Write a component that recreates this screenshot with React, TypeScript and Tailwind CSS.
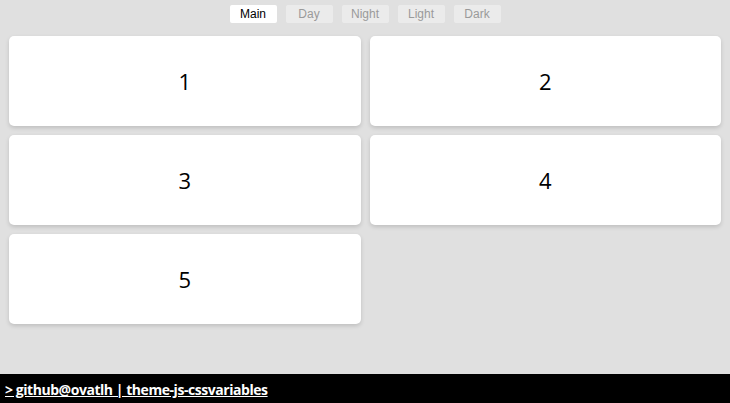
const themes = ["Main", "Day", "Night", "Light", "Dark"];
const cards = [1, 2, 3, 4, 5];

export default function App() {
  return (
    <div className="flex min-h-screen flex-col bg-[#e0e0e0] font-['Liberation_Sans',Arial,sans-serif]">
      <div className="flex h-[27px] justify-center gap-[9px] pt-[5px]">
        {themes.map((t, i) => (
          <button
            key={t}
            className={
              i === 0
                ? "h-[18px] w-[47px] rounded-[2px] bg-white text-[12px] leading-[18px] text-black"
                : "h-[18px] w-[47px] rounded-[2px] bg-[#ebebeb] text-[12px] leading-[18px] text-[#9a9a9a]"
            }
          >
            {t}
          </button>
        ))}
      </div>

      <div className="grid grid-cols-2 gap-[9px] p-[9px]">
        {cards.map((n) => (
          <div
            key={n}
            className="flex h-[90px] items-center justify-center rounded-[5px] bg-white font-['Open_Sans',sans-serif] text-[22px] text-black shadow-[0_2px_4px_rgba(0,0,0,0.15)]"
          >
            {n}
          </div>
        ))}
      </div>

      <div className="mt-auto flex h-[29px] items-center bg-black px-[5px] pt-[2px]">
        <a className="font-['Open_Sans',sans-serif] text-[14px] font-bold tracking-[-0.45px] text-white underline">
          &gt; github@ovatlh | theme-js-cssvariables
        </a>
      </div>
    </div>
  );
}
